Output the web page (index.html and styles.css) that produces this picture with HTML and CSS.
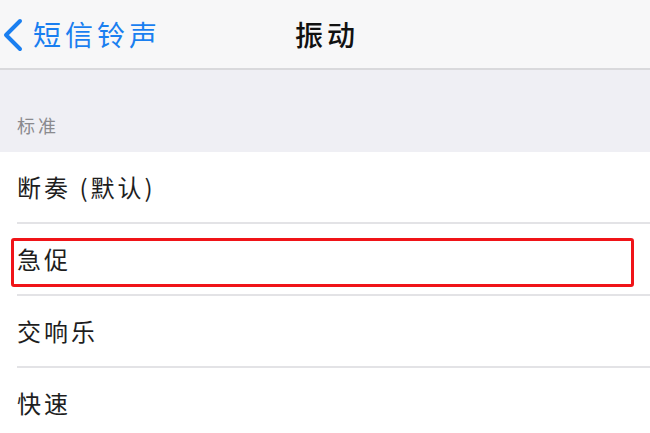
FILE: index.html
```html
<!DOCTYPE html>
<html lang="zh-CN">
<head>
<meta charset="utf-8">
<title>振动</title>
<link rel="stylesheet" href="styles.css">
</head>
<body>
<div class="screen">
  <header class="navbar">
    <a class="back" href="#">
      <svg class="chev" width="24" height="34" viewBox="0 0 24 34" aria-hidden="true">
        <path d="M20 3 L6 17 L20 31" fill="none" stroke="#1a7ff0" stroke-width="4" stroke-linecap="round" stroke-linejoin="round"/>
      </svg>
      <span class="back-label">短信铃声</span>
    </a>
    <h1 class="title">振动</h1>
  </header>
  <div class="group-header">标准</div>
  <ul class="list">
    <li class="row"><span class="label">断奏 (默认)</span></li>
    <li class="row"><span class="label">急促</span><span class="highlight"></span></li>
    <li class="row"><span class="label">交响乐</span></li>
    <li class="row"><span class="label">快速</span></li>
  </ul>
</div>
</body>
</html>
```

FILE: styles.css
```css
* { box-sizing: border-box; }
html, body {
  margin: 0;
  padding: 0;
  background: #ffffff;
  font-family: "Noto Sans CJK SC", "Noto Sans", sans-serif;
}
.screen {
  width: 650px;
  height: 433px;
  overflow: hidden;
  background: #ffffff;
}
.navbar {
  position: relative;
  height: 70px;
  background: #f7f7f8;
  border-bottom: 2px solid #d9d9dc;
  display: flex;
  align-items: center;
  justify-content: center;
}
.back {
  position: absolute;
  left: 0;
  top: 0;
  bottom: 0;
  display: flex;
  align-items: center;
  text-decoration: none;
  color: #1a7ff0;
}
.chev { display: block; margin-top: 1px; }
.back-label {
  margin-left: 9px;
  font-size: 28px;
  letter-spacing: 4px;
  line-height: 1;
}
.title {
  margin: 0;
  font-size: 28px;
  font-weight: 500;
  letter-spacing: 4px;
  margin-right: -4px;
  color: #111111;
  line-height: 1;
}
.group-header {
  height: 82px;
  background: #efeff4;
  padding: 45px 0 0 17px;
  font-size: 18px;
  letter-spacing: 3px;
  line-height: 20px;
  color: #8a8a8e;
}
.list {
  list-style: none;
  margin: 0;
  padding: 0;
  background: #ffffff;
}
.row {
  position: relative;
  height: 72px;
  padding-left: 17px;
  display: flex;
  align-items: center;
  font-size: 24px;
  letter-spacing: 3px;
  color: #1e1e1e;
}
.row::after {
  content: "";
  position: absolute;
  left: 17px;
  right: 0;
  bottom: 0;
  height: 2px;
  background: #e3e3e6;
}
.row:last-child::after { display: none; }
.label { line-height: 1; margin-top: -2px; }
.highlight {
  position: absolute;
  left: 11px;
  top: 14px;
  width: 623px;
  height: 49px;
  border: 3px solid #f01418;
  border-radius: 3px;
}
```
